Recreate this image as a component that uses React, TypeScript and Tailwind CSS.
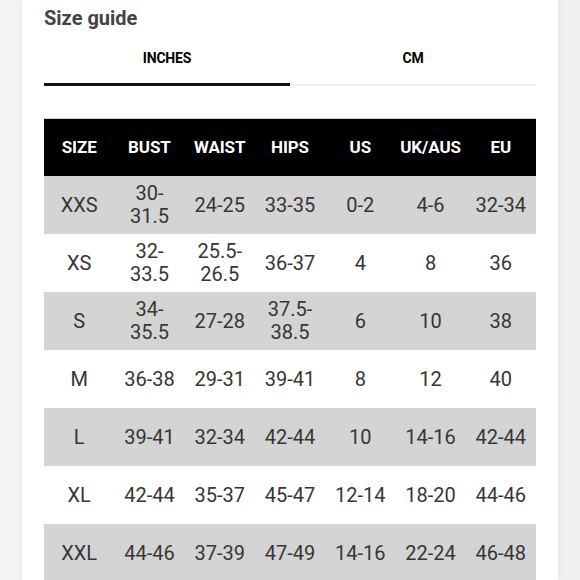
import React from "react";

const rows: string[][] = [
  ["XXS", "30-\n31.5", "24-25", "33-35", "0-2", "4-6", "32-34"],
  ["XS", "32-\n33.5", "25.5-\n26.5", "36-37", "4", "8", "36"],
  ["S", "34-\n35.5", "27-28", "37.5-\n38.5", "6", "10", "38"],
  ["M", "36-38", "29-31", "39-41", "8", "12", "40"],
  ["L", "39-41", "32-34", "42-44", "10", "14-16", "42-44"],
  ["XL", "42-44", "35-37", "45-47", "12-14", "18-20", "44-46"],
  ["XXL", "44-46", "37-39", "47-49", "14-16", "22-24", "46-48"],
];

const headers = ["SIZE", "BUST", "WAIST", "HIPS", "US", "UK/AUS", "EU"];

export default function App() {
  return (
    <div
      className="w-[580px] h-[580px] overflow-hidden flex bg-gradient-to-r from-[#f4f4f4] via-[#ececec] to-[#f0f0f0]"
      style={{ fontFamily: "Roboto, 'Liberation Sans', sans-serif" }}
    >
      <div className="ml-[22px] w-[536px] bg-white pl-[22px] pr-[22px] pt-[6px] shadow-[0_0_8px_rgba(0,0,0,0.06)]">
        <div className="text-[20px] leading-[24px] font-bold text-[#444444]">Size guide</div>
        <div className="flex">
          <div className="flex-1 flex flex-col">
            <div className="h-[53px] pt-[4px] flex items-center justify-center text-[14px] font-bold text-black tracking-[-0.2px]">
              INCHES
            </div>
            <div className="h-[3px] bg-[#111111]" />
          </div>
          <div className="flex-1 flex flex-col">
            <div className="h-[53px] pt-[4px] flex items-center justify-center text-[14px] font-bold text-black tracking-[-0.2px]">
              CM
            </div>
            <div className="h-[2px] mt-[1px] bg-[#f0f0f0]" />
          </div>
        </div>
        <div className="mt-[32px] border-t border-[#cfcfcf]">
          <div className="grid grid-cols-7 bg-black h-[57px]">
            {headers.map((h) => (
              <div
                key={h}
                className="flex items-center justify-center text-white text-[17px] font-bold tracking-[-0.1px]"
              >
                {h}
              </div>
            ))}
          </div>
          {rows.map((r, i) => (
            <div
              key={r[0]}
              className={
                "grid grid-cols-7 h-[58px] " + (i % 2 === 0 ? "bg-[#d4d4d4]" : "bg-white")
              }
            >
              {r.map((c, j) => (
                <div
                  key={j}
                  className="flex items-center justify-center text-center whitespace-pre-line text-[20px] leading-[23px] text-[#363636]"
                >
                  {c}
                </div>
              ))}
            </div>
          ))}
        </div>
      </div>
    </div>
  );
}
